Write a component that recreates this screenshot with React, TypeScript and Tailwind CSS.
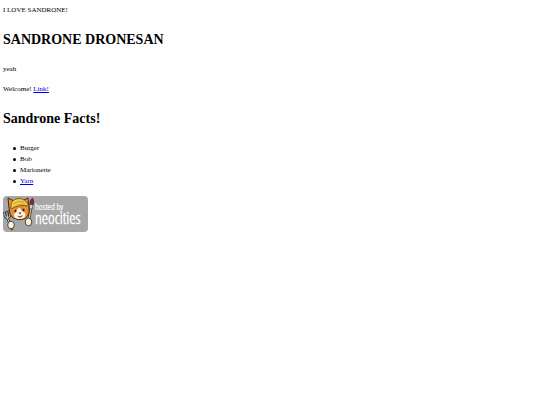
const facts = ["Burger", "Bob", "Marionette"];

const itemClass =
  "flex items-center gap-1 before:size-[3px] before:rounded-full before:bg-black before:content-['']";

function NeocitiesBadge() {
  return (
    <svg className="block h-9 w-[85px]" viewBox="0 0 85 36" role="img" aria-label="Hosted by Neocities">
      <rect width="85" height="36" rx="4" fill="#a7a7a7" />
      {/* fork */}
      <g strokeLinecap="round" strokeLinejoin="round" fill="none">
        <path d="M4 21 L9 33 M1.500 17 L2.500 21 L4.500 22 L7 20 L6 15.500 M3.800 16 L4.500 21" stroke="#333" strokeWidth="2.600" />
        <path d="M4 21 L9 33 M1.500 17 L2.500 21 L4.500 22 L7 20 L6 15.500 M3.800 16 L4.500 21" stroke="#ccd1d4" strokeWidth="1" />
      </g>
      {/* brush */}
      <path d="M28 12 L25 28" stroke="#333" strokeWidth="2.800" strokeLinecap="round" />
      <path d="M28 12 L25 28" stroke="#e3b06d" strokeWidth="1.400" />
      <path d="M27 9 Q26 5 29.500 2 Q31.500 5 30 9 Z" fill="#9b2530" stroke="#482126" strokeWidth=".8" />
      <path d="M27 8.500 L30 9 L29 13 L26.500 12.500 Z" fill="#ddd" stroke="#444" strokeWidth=".6" />
      {/* cat head */}
      <path d="M6 12 L5 2 L11 5 L19 5 L25 2 L26 12 Q27 20 21 23 Q15 25 10 22 Q6 19 6 12 Z" fill="#ec8c36" stroke="#3a2b20" strokeWidth="1" />
      <path d="M15 13 Q16.500 10 18 14 Q25 17 21 22 Q16 24 12 22 Q9 18 15 13 Z" fill="#fff5df" />
      <path d="M8 12 Q7 5 13 3 Q20 1 24 7 L26 10 Q17 8 8 13 Z" fill="#f5cf49" stroke="#7e5a18" strokeWidth="1" />
      <path d="M10 8 Q15 4 21 6 M10 11 Q16 7 22 8" stroke="#b8872b" strokeWidth=".7" fill="none" />
      <ellipse cx="12.500" cy="15" rx="1" ry="1.500" fill="#291f1b" />
      <ellipse cx="20.500" cy="14" rx="1" ry="1.500" fill="#291f1b" />
      <path d="M15.500 16.500 L18.500 16.500 L17 18.500 Z" fill="#472b24" />
      <path d="M14 19.500 Q17 21 20 19 Q19 22 16 21.500 Z" fill="#9c3e32" />
      {/* paws */}
      <ellipse cx="8" cy="29" rx="3.300" ry="3.800" fill="#fff4df" stroke="#54422e" strokeWidth="1" />
      <ellipse cx="25.500" cy="26" rx="3.300" ry="3.800" fill="#fff4df" stroke="#54422e" strokeWidth="1" />
      <g fontFamily="'Open Sans Condensed Light', 'Liberation Sans Narrow', 'Liberation Sans', sans-serif" fontWeight="300" fill="#ffffff" stroke="#ffffff">
        <text x="32" y="14" fontSize="9" strokeWidth=".2">hosted by</text>
        <text x="32" y="28" fontSize="16" strokeWidth=".4">neocities</text>
      </g>
    </svg>
  );
}

export default function App() {
  return (
    <main className="min-h-screen bg-[#fefefe] px-[3px] pt-[5px] font-['Liberation_Serif',serif] text-[7px] leading-[11px] text-black">
      <p>I LOVE SANDRONE!</p>
      <h1 className="mt-[13px] text-[14px] leading-[22px] font-bold">SANDRONE DRONESAN</h1>
      <p className="mt-[13px]">yeah</p>
      <p className="mt-[9px]">
        Welcome! <a href="#link" className="text-[#0000ee] underline">Link!</a>
      </p>
      <h2 className="mt-[13px] text-[14px] leading-[22px] font-bold">Sandrone Facts!</h2>
      <ul className="mt-[13px] pl-[10px]">
        {facts.map((fact) => (
          <li key={fact} className={itemClass}>{fact}</li>
        ))}
        <li className={itemClass}>
          <a href="#yarn" className="text-[#0000ee] underline">Yarn</a>
        </li>
      </ul>
      <a href="#neocities" className="mt-[9px] inline-block">
        <NeocitiesBadge />
      </a>
    </main>
  );
}
